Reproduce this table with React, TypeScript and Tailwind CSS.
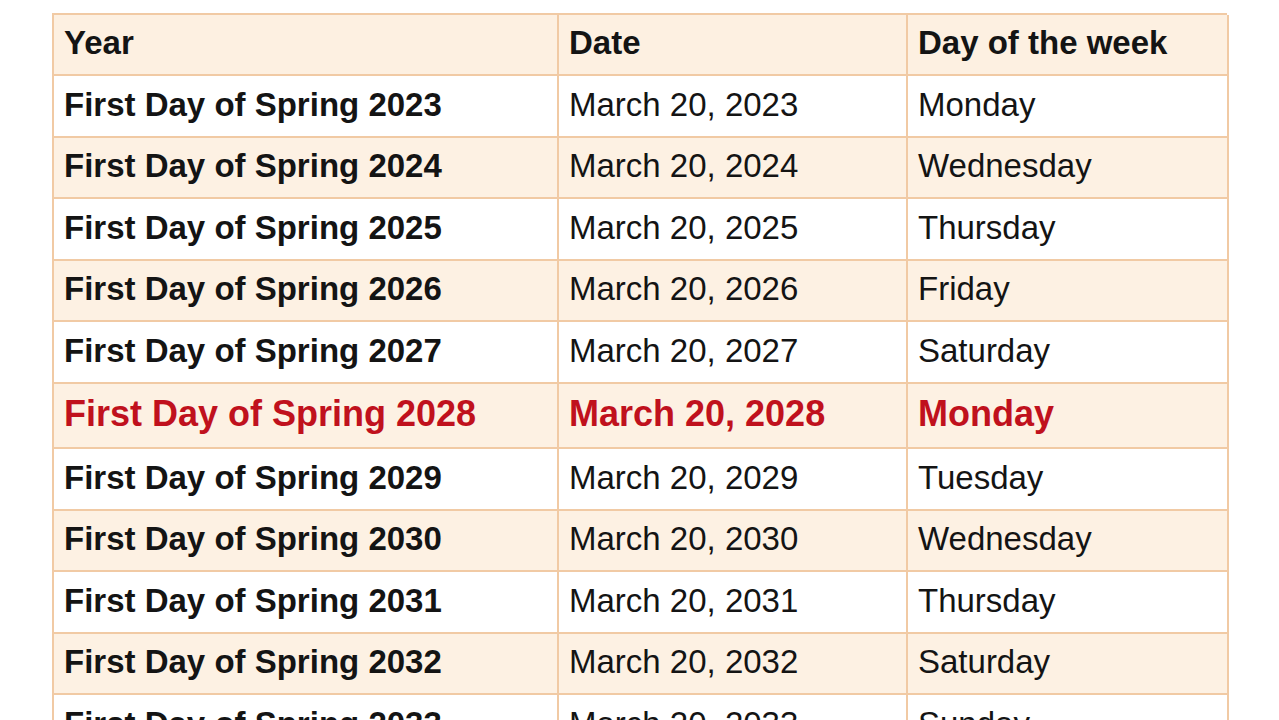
import React from "react";

const rows: { y: string; d: string; w: string }[] = [
  { y: "2023", d: "March 20, 2023", w: "Monday" },
  { y: "2024", d: "March 20, 2024", w: "Wednesday" },
  { y: "2025", d: "March 20, 2025", w: "Thursday" },
  { y: "2026", d: "March 20, 2026", w: "Friday" },
  { y: "2027", d: "March 20, 2027", w: "Saturday" },
  { y: "2028", d: "March 20, 2028", w: "Monday" },
  { y: "2029", d: "March 20, 2029", w: "Tuesday" },
  { y: "2030", d: "March 20, 2030", w: "Wednesday" },
  { y: "2031", d: "March 20, 2031", w: "Thursday" },
  { y: "2032", d: "March 20, 2032", w: "Saturday" },
  { y: "2033", d: "March 20, 2033", w: "Sunday" },
];

export default function App() {
  return (
    <div
      className="w-[1279px] h-[720px] overflow-hidden bg-white pt-[13px] pl-[52px]"
      style={{ fontFamily: '"Liberation Sans", Arial, sans-serif' }}
    >
      <div className="w-[1175px] border-l-2 border-t-2 border-[#f1caa4]">
        <div className="grid grid-cols-[505px_349px_321px] h-[61px] bg-[#fdf0e1] text-[33px] font-bold text-[#141414]">
          <div className="border-r-2 border-b-2 border-[#f1caa4] pl-[10px] pb-[3px] flex items-center">Year</div>
          <div className="border-r-2 border-b-2 border-[#f1caa4] pl-[10px] pb-[3px] flex items-center">Date</div>
          <div className="border-r-2 border-b-2 border-[#f1caa4] pl-[10px] pb-[3px] flex items-center">Day of the week</div>
        </div>
        {rows.map((r, i) => {
          const red = r.y === "2028";
          const bg = i % 2 === 1 ? "bg-[#fdf1e3]" : "bg-white";
          return (
            <div
              key={r.y}
              className={`grid grid-cols-[505px_349px_321px] ${red ? "h-[65px] text-[36px] text-[#c0111d]" : "h-[61.6px] text-[33px] text-[#141414]"} ${bg}`}
            >
              <div className="border-r-2 border-b-2 border-[#f1caa4] pl-[10px] pb-[3px] flex items-center font-bold">
                First Day of Spring {r.y}
              </div>
              <div className={`border-r-2 border-b-2 border-[#f1caa4] pl-[10px] pb-[3px] flex items-center ${red ? "font-bold" : ""}`}>
                {r.d}
              </div>
              <div className={`border-r-2 border-b-2 border-[#f1caa4] pl-[10px] pb-[3px] flex items-center ${red ? "font-bold" : ""}`}>
                {r.w}
              </div>
            </div>
          );
        })}
      </div>
    </div>
  );
}
